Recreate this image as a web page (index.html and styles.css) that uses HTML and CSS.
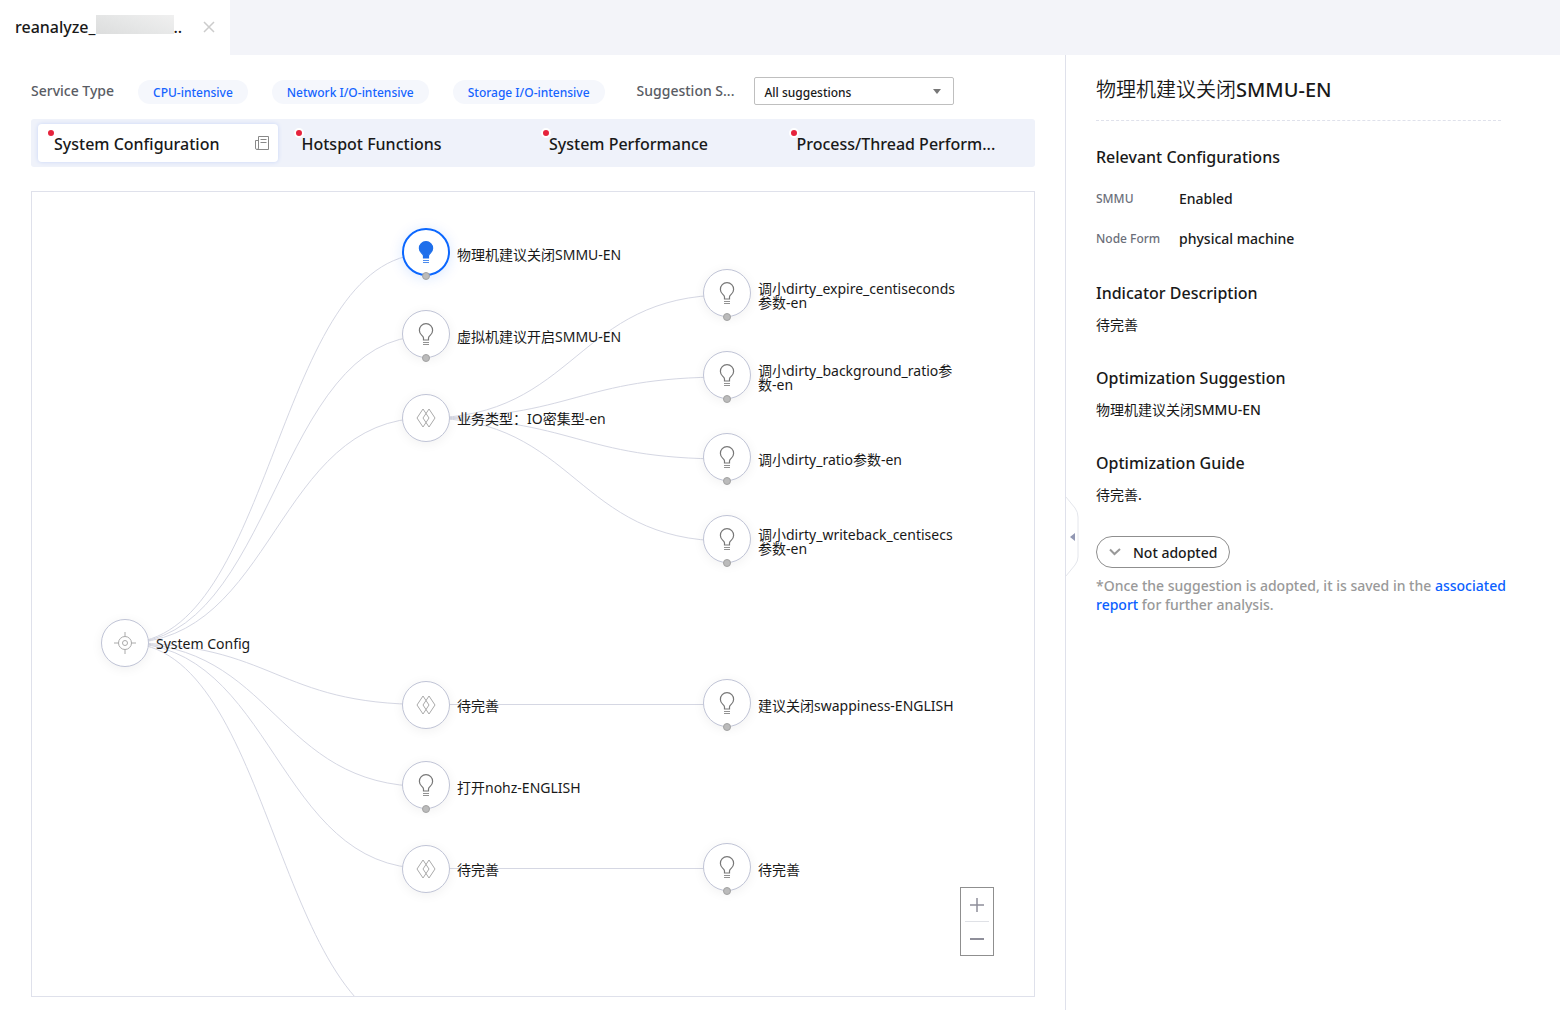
FILE: index.html
```html
<!DOCTYPE html>
<html lang="en">
<head>
<meta charset="utf-8">
<title>System Configuration</title>
<link rel="stylesheet" href="styles.css">
</head>
<body>
<svg class="sprite" aria-hidden="true">
  <symbol id="bulb" viewBox="0 0 16 24">
    <path d="M5.500 18V16C5.500 14.700 4.700 14.100 3.600 13.100A6.600 6.600 0 1 1 12.400 13.100C11.300 14.100 10.500 14.700 10.500 16V18z" fill="var(--bulb-fill)" stroke="currentColor" stroke-width="1.200"/>
    <path d="M5 20.500h6M5 22.500h6" fill="none" stroke="currentColor" stroke-width="1" opacity=".8"/>
  </symbol>
  <symbol id="diamond" viewBox="0 0 20 20">
    <path d="M7 1 13 10 7 19 1 10zM13 1 19 10 13 19 7 10z" fill="none" stroke="currentColor"/>
  </symbol>
  <symbol id="target" viewBox="0 0 24 24">
    <circle cx="12" cy="12" r="6.500" fill="none" stroke="currentColor"/>
    <circle cx="12" cy="12" r="2.500" fill="none" stroke="currentColor"/>
    <path d="M12 1v4.500M12 18.500V23M1 12h4.500M18.500 12H23" stroke="currentColor"/>
  </symbol>
</svg>

<header class="doc-tabs">
  <div class="doc-tab">
    <span class="doc-name">reanalyze_<i class="masked"></i>..</span>
    <button class="close" aria-label="Close"><svg width="12" height="12" viewBox="0 0 12 12"><path d="M1 1l10 10M11 1 1 11" stroke="currentColor" stroke-width="1.500"/></svg></button>
  </div>
</header>

<main class="workspace">
  <section class="analysis">
    <div class="filters">
      <span class="filter-label">Service Type</span>
      <span class="pill">CPU-intensive</span>
      <span class="pill">Network I/O-intensive</span>
      <span class="pill">Storage I/O-intensive</span>
      <label class="filter-label source" for="source">Suggestion S...</label>
      <span class="select-box">
        <select id="source"><option>All suggestions</option></select>
      </span>
    </div>

    <nav class="tabs">
      <button class="tab active"><span class="tab-text">System Configuration</span>
        <svg class="report" width="14" height="14" viewBox="0 0 14 14" fill="none" stroke="currentColor"><path d="M3.500.500h10v13H2a1.500 1.500 0 0 1-1.500-1.500V4.500h3M3.500.500V12a1.500 1.500 0 0 1-1.500 1.500M5.500 3.500h6M5.500 6.500h6"/></svg>
      </button>
      <button class="tab"><span class="tab-text">Hotspot Functions</span></button>
      <button class="tab"><span class="tab-text">System Performance</span></button>
      <button class="tab"><span class="tab-text">Process/Thread Perform...</span></button>
    </nav>

    <div class="canvas">
      <svg class="edges" width="1002" height="860" viewBox="0 0 1002 860">
        <path d="M93 451C243 451 243 62 394 62M93 451C243 451 243 144 394 144M93 451C243 451 243 226 394 226M93 451C243 451 243 512.500 394 512.500M93 451C243 451 243 594.500 394 594.500M93 451C243 451 243 676.500 394 676.500M93 451C243 451 243 841 394 841"/>
        <path d="M394 226C544 226 544 103 695 103M394 226C544 226 544 185 695 185M394 226C544 226 544 267 695 267M394 226C544 226 544 349 695 349M394 512.500H695M394 676.500H695"/>
      </svg>
      <div class="node root" style="left:93px;top:451px"><span class="disc"><svg width="24" height="24"><use href="#target"/></svg></span><span class="name">System Config</span></div>

      <div class="node tip selected" style="left:394px;top:62px"><span class="disc"><svg width="16" height="24"><use href="#bulb"/></svg></span><span class="name">物理机建议关闭SMMU-EN</span></div>
      <div class="node tip" style="left:394px;top:144px"><span class="disc"><svg width="16" height="24"><use href="#bulb"/></svg></span><span class="name">虚拟机建议开启SMMU-EN</span></div>
      <div class="node" style="left:394px;top:226px"><span class="disc"><svg width="20" height="20"><use href="#diamond"/></svg></span><span class="name">业务类型：IO密集型-en</span></div>
      <div class="node" style="left:394px;top:513px"><span class="disc"><svg width="20" height="20"><use href="#diamond"/></svg></span><span class="name">待完善</span></div>
      <div class="node tip" style="left:394px;top:595px"><span class="disc"><svg width="16" height="24"><use href="#bulb"/></svg></span><span class="name">打开nohz-ENGLISH</span></div>
      <div class="node" style="left:394px;top:677px"><span class="disc"><svg width="20" height="20"><use href="#diamond"/></svg></span><span class="name">待完善</span></div>

      <div class="node tip" style="left:695px;top:103px"><span class="disc"><svg width="16" height="24"><use href="#bulb"/></svg></span><span class="name">调小dirty_expire_centiseconds<br>参数-en</span></div>
      <div class="node tip" style="left:695px;top:185px"><span class="disc"><svg width="16" height="24"><use href="#bulb"/></svg></span><span class="name">调小dirty_background_ratio参<br>数-en</span></div>
      <div class="node tip" style="left:695px;top:267px"><span class="disc"><svg width="16" height="24"><use href="#bulb"/></svg></span><span class="name">调小dirty_ratio参数-en</span></div>
      <div class="node tip" style="left:695px;top:349px"><span class="disc"><svg width="16" height="24"><use href="#bulb"/></svg></span><span class="name">调小dirty_writeback_centisecs<br>参数-en</span></div>
      <div class="node tip" style="left:695px;top:513px"><span class="disc"><svg width="16" height="24"><use href="#bulb"/></svg></span><span class="name">建议关闭swappiness-ENGLISH</span></div>
      <div class="node tip" style="left:695px;top:677px"><span class="disc"><svg width="16" height="24"><use href="#bulb"/></svg></span><span class="name">待完善</span></div>

      <div class="zoom">
        <button aria-label="Zoom in"><svg width="14" height="14" viewBox="0 0 14 14"><path d="M0 7h14M7 0v14" stroke="currentColor" stroke-width="1.500"/></svg></button>
        <button aria-label="Zoom out"><svg width="14" height="14" viewBox="0 0 14 14"><path d="M0 7h14" stroke="currentColor" stroke-width="2"/></svg></button>
      </div>
    </div>
  </section>

  <aside class="details">
    <button class="collapse" aria-label="Collapse panel"><svg width="16" height="84" viewBox="0 0 16 84"><path class="flap" d="M1 2 10 13Q13 17 13 22V62Q13 66 10 70L1 81"/><path d="M10 38v8l-5-4z" fill="#9298b3"/></svg></button>
    <h1><span class="cjk">物理机建议关闭</span>SMMU-EN</h1>
    <h2>Relevant Configurations</h2>
    <dl>
      <dt>SMMU</dt><dd>Enabled</dd>
      <dt>Node Form</dt><dd>physical machine</dd>
    </dl>
    <h2>Indicator Description</h2>
    <p><span class="cjk">待完善</span></p>
    <h2>Optimization Suggestion</h2>
    <p><span class="cjk">物理机建议关闭</span>SMMU-EN</p>
    <h2>Optimization Guide</h2>
    <p><span class="cjk">待完善</span>.</p>
    <button class="adopt"><svg width="12" height="8" viewBox="0 0 12 8"><path d="M1 1.500 5.500 6 11 1" fill="none" stroke="#999" stroke-width="2"/></svg><span>Not adopted</span></button>
    <p class="note">*Once the suggestion is adopted, it is saved in the <a href="#">associated report</a> for further analysis.</p>
  </aside>
</main>
</body>
</html>
```
FILE: styles.css
```css
*,
*::before,
*::after {
  box-sizing: border-box;
}

body {
  margin: 0;
  min-height: 100vh;
  display: flex;
  flex-direction: column;
  background: #fff;
  color: #191919;
  font: 500 14px/20px "Noto Sans", "Noto Sans CJK SC", sans-serif;
}

button,
select {
  font: inherit;
  color: inherit;
  background: none;
  border: 0;
  padding: 0;
  margin: 0;
}

svg {
  display: block;
}

.sprite {
  position: absolute;
  width: 0;
  height: 0;
}

.cjk {
  font-weight: 400;
}

h1 .cjk {
  font-weight: 350;
}

.doc-tabs {
  display: flex;
  height: 55px;
  background: #f3f4f9;
}

.doc-tab {
  display: flex;
  align-items: center;
  justify-content: space-between;
  width: 230px;
  padding: 0 15px 2px;
  background: #fff;
  font-size: 16px;
}

.doc-name {
  display: flex;
  align-items: center;
}

.masked {
  width: 78px;
  height: 19px;
  margin-bottom: 4px;
  background: linear-gradient(20deg, #dcdddd, #e6e7e7 50%, #f0f0f0);
}

.close {
  color: #ccc;
}

.workspace {
  flex: 1;
  display: flex;
}

.analysis {
  flex: 1;
  min-width: 0;
  display: flex;
  flex-direction: column;
  padding: 22px 30px 13px 31px;
}

.filters {
  display: flex;
  align-items: center;
  gap: 24px;
  height: 28px;
  margin-bottom: 14px;
}

.filter-label {
  color: #595c64;
  white-space: nowrap;
}

.source {
  margin-left: 8px;
}

.pill {
  height: 24px;
  margin-top: 2px;
  padding: 0 15px;
  border-radius: 12px;
  background: #f5f7fc;
  color: #1664ff;
  font-size: 12px;
  line-height: 25px;
  white-space: nowrap;
}

.select-box {
  display: flex;
  align-items: center;
  width: 200px;
  height: 28px;
  margin-left: -4px;
  border: 1px solid #bfbfbf;
  border-radius: 2px;
}

.select-box::after {
  content: "";
  margin-left: -20px;
  border: 4px solid transparent;
  border-top: 5px solid #777;
  border-bottom: 0;
  pointer-events: none;
}

.select-box select {
  width: 100%;
  height: 26px;
  padding: 3px 0 0 9px;
  appearance: none;
  font-size: 12px;
}

.tabs {
  display: grid;
  grid-template-columns: repeat(4, 1fr);
  align-items: center;
  height: 48px;
  padding: 0 7px;
  margin-bottom: 24px;
  border-radius: 3px;
  background: #eff2fa;
}

.tab {
  display: flex;
  align-items: center;
  justify-content: space-between;
  height: 38px;
  margin-right: 8px;
  padding: 0 9px 0 16px;
  border-radius: 4px;
  font-size: 16px;
  white-space: nowrap;
}

.tab.active {
  background: #fff;
  box-shadow: 0 0 4px #c9d6f7;
}

.tab-text {
  position: relative;
  padding-top: 2px;
}

.tab-text::before {
  content: "";
  position: absolute;
  left: -8px;
  top: -4px;
  width: 10px;
  height: 10px;
  border: 2px solid #fff;
  border-radius: 50%;
  background: #e6233c;
}

.report {
  color: #888;
}

.canvas {
  position: relative;
  flex: 1;
  min-height: 400px;
  overflow: hidden;
  border: 1px solid #dfe1eb;
}

.edges {
  position: absolute;
  left: 0;
  top: 0;
  fill: none;
  stroke: #d5d7e3;
}

/* A node's left/top is the end point of its edge. */
.node {
  position: absolute;
  display: flex;
  align-items: center;
  gap: 7px;
  height: 48px;
  margin: -24px 0 0 -24px;
  color: #191919;
  font-weight: 400;
  line-height: 14px;
  white-space: nowrap;
}

.disc {
  position: relative;
  display: flex;
  align-items: center;
  justify-content: center;
  width: 48px;
  height: 48px;
  border: 1px solid #c0c4d6;
  border-radius: 50%;
  background: #fff;
  box-shadow: 0 2px 12px #0000000f;
  color: #aaa;
}

.name {
  padding-top: 1px;
}

.tip .disc {
  --bulb-fill: none;
  top: -2px;
  color: #777;
}

.tip .disc::after {
  content: "";
  position: absolute;
  left: 19px;
  bottom: -5px;
  width: 8px;
  height: 8px;
  border: 1px solid #a2a2a2;
  border-radius: 50%;
  background: #bbb;
}

.selected .disc {
  --bulb-fill: #1f6feb;
  border: 2px solid #0b67ff;
  box-shadow: 0 2px 14px #0b67ff26;
  color: #1f6feb;
}

.selected .disc::after {
  left: 18px;
  bottom: -6px;
}

.zoom {
  position: absolute;
  right: 40px;
  bottom: 40px;
  width: 34px;
  padding: 0 4px;
  border: 1px solid #8f8f8f;
  background: #fff;
  color: #8f8f9a;
}

.zoom button {
  display: flex;
  align-items: center;
  justify-content: center;
  width: 100%;
  height: 33px;
}

.zoom button + button {
  height: 34px;
  border-top: 1px solid #dfe1e6;
}

.details {
  position: relative;
  flex: 0 0 495px;
  padding: 20px 59px 20px 30px;
  border-left: 1px solid #dfe1eb;
}

.collapse {
  position: absolute;
  left: -1px;
  top: 440px;
}

.flap {
  fill: #fff;
  stroke: #e4e6ec;
}

h1,
h2,
p,
dl,
dd {
  margin: 0;
}

h1 {
  padding-bottom: 15px;
  margin-bottom: 24px;
  border-bottom: 1px dashed #dfe1eb;
  font-size: 20px;
  font-weight: 500;
  line-height: 30px;
}

h2 {
  margin-bottom: 10px;
  font-size: 16px;
  font-weight: 500;
  line-height: 24px;
}

dl {
  display: grid;
  grid-template-columns: 83px 1fr;
  gap: 20px 0;
  margin: 20px 0 32px;
}

dt {
  color: #6b6f7a;
  font-size: 12px;
}

.details p {
  margin-bottom: 31px;
}

.adopt {
  display: flex;
  align-items: center;
  gap: 12px;
  height: 32px;
  padding: 0 12px;
  border: 1px solid #8f8f8f;
  border-radius: 16px;
}

.adopt span {
  padding-top: 2px;
}

.details .note {
  margin: 8px -20px 0 0;
  color: #999;
  line-height: 19px;
}

.note a {
  color: #0b5fff;
  text-decoration: none;
}
```
